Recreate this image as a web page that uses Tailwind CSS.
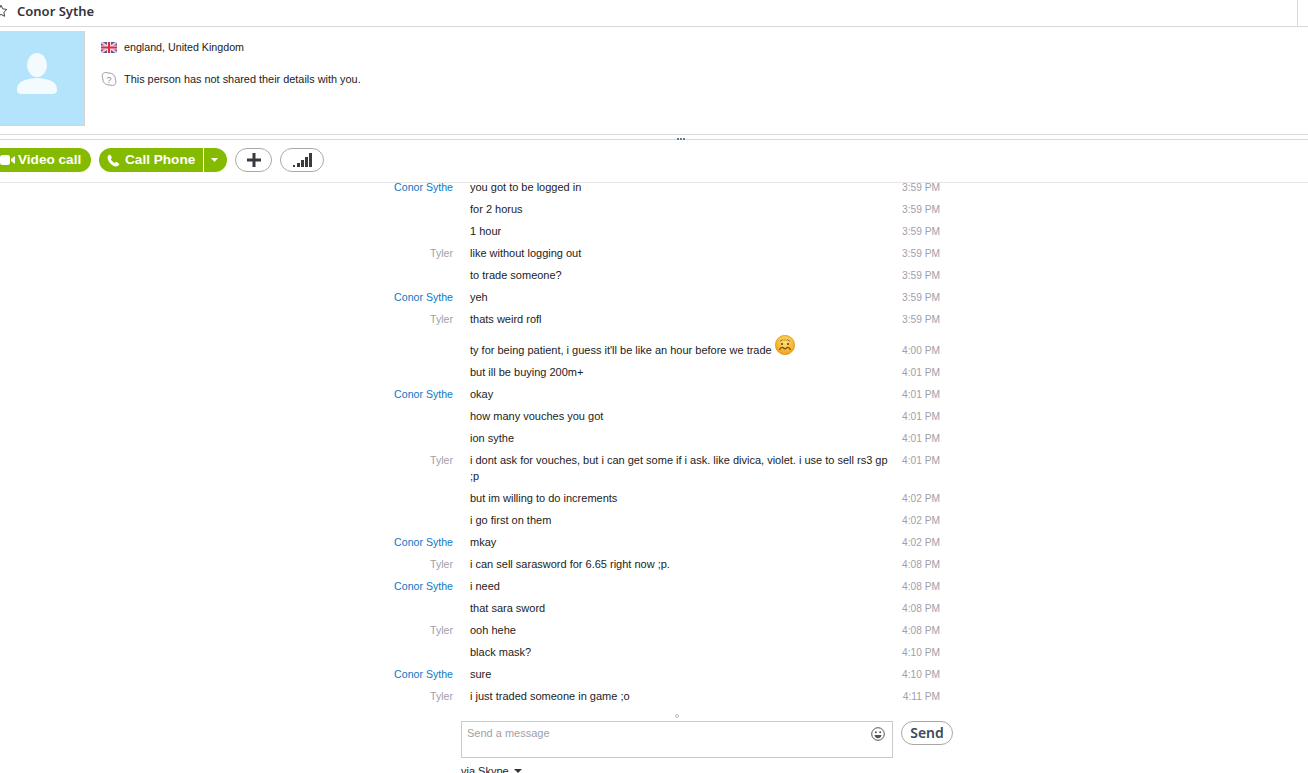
<!DOCTYPE html>
<html lang="en">
<head>
    <meta charset="UTF-8">
    <script src="https://cdn.jsdelivr.net/npm/@tailwindcss/browser@4"></script>
    <title>Conor Sythe - Skype</title>
</head>
<body class="h-[773px] overflow-hidden bg-white text-[11px] leading-4 text-[#1c1c24] font-['Liberation_Sans',sans-serif]">
    <!-- Title bar -->
    <header class="h-[27px] flex items-center border-b border-[#d9d9d9]">
        <div class="flex items-center pb-[4px]">
            <svg class="w-[14px] h-[14px] -ml-[6px] shrink-0" viewBox="0 0 14 14" fill="none" stroke="#444" stroke-width="1"><path d="M7 1.200l1.800 3.700 4 .6-2.900 2.800.7 4L7 10.400l-3.600 1.900.7-4L1.200 5.500l4-.6z"/></svg>
            <h1 class="ml-[9px] text-[13px] font-semibold text-[#33333b] font-['Noto_Sans',sans-serif]">Conor Sythe</h1>
        </div>
        <div class="ml-auto mr-[10px] w-px h-full bg-[#d9d9d9]"></div>
    </header>

    <!-- Profile -->
    <section class="h-[108px] flex border-b border-[#d9d9d9] pt-[4px]">
        <div class="w-[85px] h-[95px] bg-[#b3e4fb] border-r border-b border-[#d4d4d4] flex items-center justify-center shrink-0 pr-[10px] pb-[8px]">
            <svg class="w-[42px] h-[42px]" viewBox="0 0 42 42" fill="#f4fbff"><ellipse cx="21" cy="12" rx="10" ry="12"/><path d="M1 37c0-6 3-8 8-10 4-1 7-2 12-2s8 1 12 2c5 2 8 4 8 10 0 3-2 4-5 4H6c-3 0-5-1-5-4z"/></svg>
        </div>
        <div class="ml-[16px] pt-[8px]">
            <div class="flex items-center h-4">
                <svg class="w-[16px] h-[11px]" viewBox="0 0 16 11"><rect width="16" height="11" fill="#4a5aa8"/><path d="M0 0l16 11M16 0L0 11" stroke="#f0c8d0" stroke-width="2"/><path d="M8 0v11M0 5.500h16" stroke="#f4dfe2" stroke-width="4"/><path d="M8 0v11M0 5.500h16" stroke="#e8263c" stroke-width="2"/></svg>
                <span class="ml-[7px] text-[10.7px]">england, United Kingdom</span>
            </div>
            <div class="flex items-center h-4 mt-[16px]">
                <svg class="w-[16px] h-[16px]" viewBox="0 0 16 16" fill="none"><path d="M4.500 1.500c1.500 0 2 .6 3.500.6 4 0 6.300 2.400 6.300 6 0 1 .6 1.500.6 3 0 2-1.500 3.400-3.400 3.400-1.300 0-2-.6-3.300-.6-3.800 0-6.400-2.500-6.400-6 0-1-.6-1.700-.6-3 0-2 1.500-3.400 3.300-3.400z" stroke="#9a9a9a"/><text x="8" y="11.500" text-anchor="middle" font-size="9" fill="#8a8a8a" font-family="Liberation Sans">?</text></svg>
                <span class="ml-[7px] text-[10.9px]">This person has not shared their details with you.</span>
            </div>
        </div>
    </section>

    <!-- Splitter -->
    <div class="h-[5px] border-b border-[#d9d9d9] flex items-center justify-center pl-[54px]">
        <div class="flex gap-px mt-[3px]">
            <i class="w-[2px] h-[2px] bg-[#5e7f9c]"></i><i class="w-[2px] h-[2px] bg-[#5e7f9c]"></i><i class="w-[2px] h-[2px] bg-[#5e7f9c]"></i>
        </div>
    </div>

    <!-- Call actions -->
    <nav class="h-[43px] flex items-start pt-[8px] border-b border-[#e6e6e6] text-[13.6px] font-bold">
        <button class="h-[24px] w-[92px] -ml-px rounded-r-full bg-[#84ba00] text-white flex items-center pl-[1px]">
            <svg class="w-[15px] h-[10px]" viewBox="0 0 15 10" fill="#fff"><rect width="10" height="10" rx="2.500"/><path d="M11 4l4-3v8l-4-3z"/></svg>
            <span class="ml-[3px]">Video call</span>
        </button>
        <div class="ml-[8px] h-[24px] flex text-white">
            <button class="w-[104px] rounded-l-full bg-[#84ba00] flex items-center pl-[8px]">
                <svg class="w-[13px] h-[13px]" viewBox="0 0 13 13" fill="#fff"><path d="M2.800.5L5 3.200 3.800 5c.7 1.700 2.200 3.200 4 4l1.600-1.300 3 2.400c-.6 1.500-1.800 2.400-3.200 2.400C4.600 12 .7 7.500.6 3.500.6 2.200 1.500 1 2.800.5z"/></svg>
                <span class="ml-[5px]">Call Phone</span>
            </button>
            <button class="ml-px w-[23px] rounded-r-full bg-[#84ba00] flex items-center justify-center pr-[2px]">
                <svg class="w-[7px] h-[4px]" viewBox="0 0 7 4" fill="#fff"><path d="M0 0h7L3.500 4z"/></svg>
            </button>
        </div>
        <button class="ml-[8px] w-[37px] h-[24px] rounded-full border border-[#a8a8a8] bg-white flex items-center justify-center">
            <svg class="w-[14px] h-[14px]" viewBox="0 0 14 14" fill="#3a3a42"><path d="M5.500 0h3v5.500H14v3H8.500V14h-3V8.500H0v-3h5.500z"/></svg>
        </button>
        <button class="ml-[8px] w-[44px] h-[24px] rounded-full border border-[#a8a8a8] bg-white flex items-center justify-center">
            <svg class="w-[19px] h-[14px]" viewBox="0 0 19 14" fill="#3a3a42"><rect x="0" y="12" width="2" height="2"/><rect x="4" y="10" width="3" height="4"/><rect x="8" y="7" width="3" height="7"/><rect x="12" y="4" width="3" height="10"/><rect x="16" y="0" width="3" height="14"/></svg>
        </button>
    </nav>

    <!-- Conversation -->
    <main class="h-[533px] overflow-hidden">
        <div class="-mt-[7px]">
            <div class="flex py-[3px]"><div class="w-[453px] text-right text-[10.6px] text-[#0a78c8]">Conor Sythe</div><div class="ml-[17px] w-[422px]">you got to be logged in</div><div class="w-[48px] text-right text-[10.2px] translate-y-px text-[#a0a0aa]">3:59 PM</div></div>
            <div class="flex py-[3px]"><div class="w-[453px]"></div><div class="ml-[17px] w-[422px]">for 2 horus</div><div class="w-[48px] text-right text-[10.2px] translate-y-px text-[#a0a0aa]">3:59 PM</div></div>
            <div class="flex py-[3px]"><div class="w-[453px]"></div><div class="ml-[17px] w-[422px]">1 hour</div><div class="w-[48px] text-right text-[10.2px] translate-y-px text-[#a0a0aa]">3:59 PM</div></div>
            <div class="flex py-[3px]"><div class="w-[453px] text-right text-[10.6px] text-[#a0a0aa]">Tyler</div><div class="ml-[17px] w-[422px]">like without logging out</div><div class="w-[48px] text-right text-[10.2px] translate-y-px text-[#a0a0aa]">3:59 PM</div></div>
            <div class="flex py-[3px]"><div class="w-[453px]"></div><div class="ml-[17px] w-[422px]">to trade someone?</div><div class="w-[48px] text-right text-[10.2px] translate-y-px text-[#a0a0aa]">3:59 PM</div></div>
            <div class="flex py-[3px]"><div class="w-[453px] text-right text-[10.6px] text-[#0a78c8]">Conor Sythe</div><div class="ml-[17px] w-[422px]">yeh</div><div class="w-[48px] text-right text-[10.2px] translate-y-px text-[#a0a0aa]">3:59 PM</div></div>
            <div class="flex py-[3px]"><div class="w-[453px] text-right text-[10.6px] text-[#a0a0aa]">Tyler</div><div class="ml-[17px] w-[422px]">thats weird rofl</div><div class="w-[48px] text-right text-[10.2px] translate-y-px text-[#a0a0aa]">3:59 PM</div></div>
            <div class="flex pt-[12px] pb-[3px]">
                <div class="w-[453px]"></div>
                <div class="ml-[17px] w-[422px] flex">
                    <span>ty for being patient, i guess it'll be like an hour before we trade</span>
                    <!-- emoticon hangs above the line -->
                    <svg class="ml-[3px] -mt-[7px] w-[20px] h-[20px]" viewBox="0 0 20 20"><defs><radialGradient id="face" cx="50%" cy="35%" r="65%"><stop offset="0" stop-color="#ffe27a"/><stop offset="1" stop-color="#f0a010"/></radialGradient></defs><circle cx="10" cy="10" r="9.700" fill="url(#face)" stroke="#d08a10" stroke-width=".6"/><path d="M5 6.500l3-2M15 6.500l-3-2" stroke="#a07020" fill="none"/><path d="M10 3.500l-1.500 2h3z" fill="none" stroke="#c89030" stroke-width=".6"/><circle cx="7" cy="9" r="1" fill="#5a3a10"/><circle cx="13" cy="9" r="1" fill="#5a3a10"/><path d="M4.500 15c1-3 3-3 4-2s2 1 3 0 3-1 4 2" stroke="#7a4a10" stroke-width="1.200" fill="none"/></svg>
                </div>
                <div class="w-[48px] text-right text-[10.2px] translate-y-px text-[#a0a0aa]">4:00 PM</div>
            </div>
            <div class="flex py-[3px]"><div class="w-[453px]"></div><div class="ml-[17px] w-[422px]">but ill be buying 200m+</div><div class="w-[48px] text-right text-[10.2px] translate-y-px text-[#a0a0aa]">4:01 PM</div></div>
            <div class="flex py-[3px]"><div class="w-[453px] text-right text-[10.6px] text-[#0a78c8]">Conor Sythe</div><div class="ml-[17px] w-[422px]">okay</div><div class="w-[48px] text-right text-[10.2px] translate-y-px text-[#a0a0aa]">4:01 PM</div></div>
            <div class="flex py-[3px]"><div class="w-[453px]"></div><div class="ml-[17px] w-[422px]">how many vouches you got</div><div class="w-[48px] text-right text-[10.2px] translate-y-px text-[#a0a0aa]">4:01 PM</div></div>
            <div class="flex py-[3px]"><div class="w-[453px]"></div><div class="ml-[17px] w-[422px]">ion sythe</div><div class="w-[48px] text-right text-[10.2px] translate-y-px text-[#a0a0aa]">4:01 PM</div></div>
            <div class="flex py-[3px]"><div class="w-[453px] text-right text-[10.6px] text-[#a0a0aa]">Tyler</div><div class="ml-[17px] w-[422px]">i dont ask for vouches, but i can get some if i ask. like divica, violet. i use to sell rs3 gp ;p</div><div class="w-[48px] text-right text-[10.2px] translate-y-px text-[#a0a0aa]">4:01 PM</div></div>
            <div class="flex py-[3px]"><div class="w-[453px]"></div><div class="ml-[17px] w-[422px]">but im willing to do increments</div><div class="w-[48px] text-right text-[10.2px] translate-y-px text-[#a0a0aa]">4:02 PM</div></div>
            <div class="flex py-[3px]"><div class="w-[453px]"></div><div class="ml-[17px] w-[422px]">i go first on them</div><div class="w-[48px] text-right text-[10.2px] translate-y-px text-[#a0a0aa]">4:02 PM</div></div>
            <div class="flex py-[3px]"><div class="w-[453px] text-right text-[10.6px] text-[#0a78c8]">Conor Sythe</div><div class="ml-[17px] w-[422px]">mkay</div><div class="w-[48px] text-right text-[10.2px] translate-y-px text-[#a0a0aa]">4:02 PM</div></div>
            <div class="flex py-[3px]"><div class="w-[453px] text-right text-[10.6px] text-[#a0a0aa]">Tyler</div><div class="ml-[17px] w-[422px]">i can sell sarasword for 6.65 right now ;p.</div><div class="w-[48px] text-right text-[10.2px] translate-y-px text-[#a0a0aa]">4:08 PM</div></div>
            <div class="flex py-[3px]"><div class="w-[453px] text-right text-[10.6px] text-[#0a78c8]">Conor Sythe</div><div class="ml-[17px] w-[422px]">i need</div><div class="w-[48px] text-right text-[10.2px] translate-y-px text-[#a0a0aa]">4:08 PM</div></div>
            <div class="flex py-[3px]"><div class="w-[453px]"></div><div class="ml-[17px] w-[422px]">that sara sword</div><div class="w-[48px] text-right text-[10.2px] translate-y-px text-[#a0a0aa]">4:08 PM</div></div>
            <div class="flex py-[3px]"><div class="w-[453px] text-right text-[10.6px] text-[#a0a0aa]">Tyler</div><div class="ml-[17px] w-[422px]">ooh hehe</div><div class="w-[48px] text-right text-[10.2px] translate-y-px text-[#a0a0aa]">4:08 PM</div></div>
            <div class="flex py-[3px]"><div class="w-[453px]"></div><div class="ml-[17px] w-[422px]">black mask?</div><div class="w-[48px] text-right text-[10.2px] translate-y-px text-[#a0a0aa]">4:10 PM</div></div>
            <div class="flex py-[3px]"><div class="w-[453px] text-right text-[10.6px] text-[#0a78c8]">Conor Sythe</div><div class="ml-[17px] w-[422px]">sure</div><div class="w-[48px] text-right text-[10.2px] translate-y-px text-[#a0a0aa]">4:10 PM</div></div>
            <div class="flex py-[3px]"><div class="w-[453px] text-right text-[10.6px] text-[#a0a0aa]">Tyler</div><div class="ml-[17px] w-[422px]">i just traded someone in game ;o</div><div class="w-[48px] text-right text-[10.2px] translate-y-px text-[#a0a0aa]">4:11 PM</div></div>
        </div>
    </main>

    <!-- Composer -->
    <footer class="ml-[461px] w-[492px]">
        <div class="h-[5px] w-[432px] flex justify-center items-center -mt-[3px]"><div class="w-[4px] h-[4px] rounded-full border border-[#b4bcc8]"></div></div>
        <div class="flex mt-[3px]">
            <div class="w-[432px] h-[37px] border border-[#c9c9cf] flex justify-between pl-[5px] pr-[7px] pt-[3px] text-[#a0a0aa]">
                <span>Send a message</span>
                <svg class="w-[14px] h-[14px] mt-[2px]" viewBox="0 0 14 14" fill="none" stroke="#555"><circle cx="7" cy="7" r="6.300"/><circle cx="4.800" cy="5.300" r="1" fill="#555" stroke="none"/><circle cx="9.200" cy="5.300" r="1" fill="#555" stroke="none"/><path d="M3.500 8h7c0 2-1.500 3.200-3.500 3.200S3.500 10 3.500 8z" fill="#555" stroke="none"/></svg>
            </div>
            <button class="ml-[8px] w-[52px] h-[24px] rounded-full border border-[#a8a8a8] text-[14px] font-semibold text-[#3a4a58] font-['Noto_Sans',sans-serif]">Send</button>
        </div>
        <div class="mt-[5px] flex items-center">via Skype<svg class="ml-[5px] w-[8px] h-[4px]" viewBox="0 0 8 4" fill="#333"><path d="M0 0h8L4 4z"/></svg></div>
    </footer>
</body>
</html>
